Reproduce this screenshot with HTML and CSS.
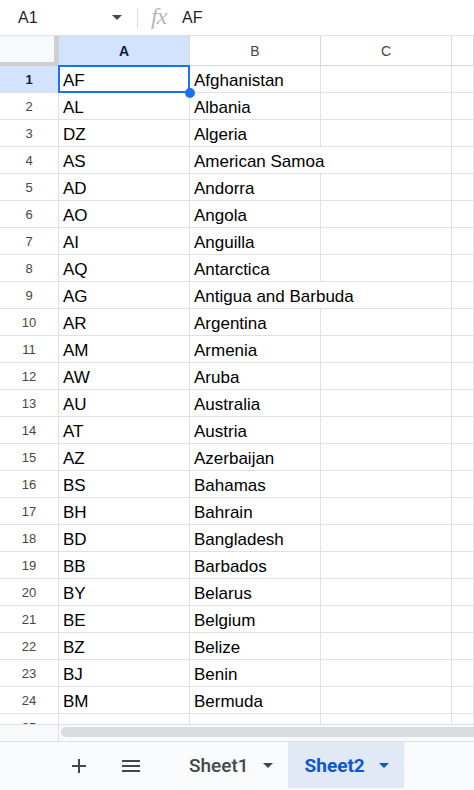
FILE: index.html
```html
<!DOCTYPE html>
<html>
<head>
  <meta charset="utf-8">
  <title>Countries</title>
  <link rel="stylesheet" href="styles.css">
</head>
<body>
  <div class="app">
    <div class="toolbar">
      <div class="namebox">A1</div>
      <span class="caret"></span>
      <span class="divider"></span>
      <span class="fx">fx</span>
      <div class="formula">AF</div>
    </div>

    <div class="sheet">
      <div class="row head">
        <div class="corner"></div>
        <div class="col sel">A</div>
        <div class="col">B</div>
        <div class="col">C</div>
        <div class="col"></div>
      </div>
      <div class="row">
        <div class="num sel">1</div>
        <div class="cell active">AF</div>
        <div class="cell">Afghanistan</div>
        <div class="cell"></div>
        <div class="cell"></div>
      </div>
      <div class="row"><div class="num">2</div><div class="cell">AL</div><div class="cell">Albania</div><div class="cell"></div><div class="cell"></div></div>
      <div class="row"><div class="num">3</div><div class="cell">DZ</div><div class="cell">Algeria</div><div class="cell"></div><div class="cell"></div></div>
      <div class="row"><div class="num">4</div><div class="cell">AS</div><div class="cell wide">American Samoa</div><div class="cell"></div></div>
      <div class="row"><div class="num">5</div><div class="cell">AD</div><div class="cell">Andorra</div><div class="cell"></div><div class="cell"></div></div>
      <div class="row"><div class="num">6</div><div class="cell">AO</div><div class="cell">Angola</div><div class="cell"></div><div class="cell"></div></div>
      <div class="row"><div class="num">7</div><div class="cell">AI</div><div class="cell">Anguilla</div><div class="cell"></div><div class="cell"></div></div>
      <div class="row"><div class="num">8</div><div class="cell">AQ</div><div class="cell">Antarctica</div><div class="cell"></div><div class="cell"></div></div>
      <div class="row"><div class="num">9</div><div class="cell">AG</div><div class="cell wide">Antigua and Barbuda</div><div class="cell"></div></div>
      <div class="row"><div class="num">10</div><div class="cell">AR</div><div class="cell">Argentina</div><div class="cell"></div><div class="cell"></div></div>
      <div class="row"><div class="num">11</div><div class="cell">AM</div><div class="cell">Armenia</div><div class="cell"></div><div class="cell"></div></div>
      <div class="row"><div class="num">12</div><div class="cell">AW</div><div class="cell">Aruba</div><div class="cell"></div><div class="cell"></div></div>
      <div class="row"><div class="num">13</div><div class="cell">AU</div><div class="cell">Australia</div><div class="cell"></div><div class="cell"></div></div>
      <div class="row"><div class="num">14</div><div class="cell">AT</div><div class="cell">Austria</div><div class="cell"></div><div class="cell"></div></div>
      <div class="row"><div class="num">15</div><div class="cell">AZ</div><div class="cell">Azerbaijan</div><div class="cell"></div><div class="cell"></div></div>
      <div class="row"><div class="num">16</div><div class="cell">BS</div><div class="cell">Bahamas</div><div class="cell"></div><div class="cell"></div></div>
      <div class="row"><div class="num">17</div><div class="cell">BH</div><div class="cell">Bahrain</div><div class="cell"></div><div class="cell"></div></div>
      <div class="row"><div class="num">18</div><div class="cell">BD</div><div class="cell">Bangladesh</div><div class="cell"></div><div class="cell"></div></div>
      <div class="row"><div class="num">19</div><div class="cell">BB</div><div class="cell">Barbados</div><div class="cell"></div><div class="cell"></div></div>
      <div class="row"><div class="num">20</div><div class="cell">BY</div><div class="cell">Belarus</div><div class="cell"></div><div class="cell"></div></div>
      <div class="row"><div class="num">21</div><div class="cell">BE</div><div class="cell">Belgium</div><div class="cell"></div><div class="cell"></div></div>
      <div class="row"><div class="num">22</div><div class="cell">BZ</div><div class="cell">Belize</div><div class="cell"></div><div class="cell"></div></div>
      <div class="row"><div class="num">23</div><div class="cell">BJ</div><div class="cell">Benin</div><div class="cell"></div><div class="cell"></div></div>
      <div class="row"><div class="num">24</div><div class="cell">BM</div><div class="cell">Bermuda</div><div class="cell"></div><div class="cell"></div></div>
      <div class="row"><div class="num">25</div><div class="cell"></div><div class="cell"></div><div class="cell"></div><div class="cell"></div></div>
    </div>

    <div class="hscroll">
      <div class="hscroll-corner"></div>
      <div class="track"><div class="thumb"></div></div>
    </div>

    <div class="tabs">
      <button class="icon-btn" title="Add sheet">
        <svg width="16" height="16" viewBox="0 0 16 16"><path d="M8 1v14M1 8h14" stroke="#444746" stroke-width="2" fill="none"/></svg>
      </button>
      <button class="icon-btn" title="All sheets">
        <svg width="18" height="14" viewBox="0 0 18 14"><path d="M0 2h18M0 7h18M0 12h18" stroke="#444746" stroke-width="2" fill="none"/></svg>
      </button>
      <div class="tab">Sheet1 <span class="tab-caret"></span></div>
      <div class="tab current">Sheet2 <span class="tab-caret"></span></div>
    </div>
  </div>
</body>
</html>
```

FILE: styles.css
```css
body {
  margin: 0;
  background-color: #fff;
  font-family: "Liberation Sans", Arial, sans-serif;
  color: #000;
}
.app {
  width: 474px;
  height: 790px;
  display: flex;
  flex-direction: column;
  overflow: hidden;
}

/* formula bar */
.toolbar {
  height: 35px;
  flex: none;
  display: flex;
  align-items: center;
  border-bottom: 1px solid #e1e1e1;
  font-size: 16px;
  color: #1f1f1f;
}
.namebox {
  width: 94px;
  padding-left: 18px;
}
.caret {
  width: 0;
  height: 0;
  border-left: 5px solid transparent;
  border-right: 5px solid transparent;
  border-top: 5px solid #444746;
  margin-right: 15px;
}
.divider {
  width: 1px;
  height: 20px;
  background: #dadce0;
  margin-right: 13px;
}
.fx {
  font-family: "Liberation Serif", serif;
  font-style: italic;
  font-size: 24px;
  letter-spacing: -1px;
  color: #b4b7bb;
  width: 31px;
  margin-top: -3px;
}

/* grid */
.sheet {
  flex: none;
  height: 688px;
  overflow: hidden;
}
.row {
  display: grid;
  grid-template-columns: 59px 131px 131px 131px 1fr;
  height: 27px;
}
.row > div {
  box-sizing: border-box;
  border-right: 1px solid #e1e1e1;
  border-bottom: 1px solid #e1e1e1;
  white-space: nowrap;
  overflow: hidden;
}
.row.head {
  height: 30px;
}
.row.head > div {
  border-color: #d6d6d6;
}
.corner {
  background: #f8f9fa;
  border-right: 5px solid #d0d0d0 !important;
  border-bottom: 4px solid #d0d0d0 !important;
}
.col {
  display: flex;
  align-items: center;
  justify-content: center;
  font-size: 14px;
  color: #444746;
}
.num {
  display: flex;
  align-items: center;
  justify-content: center;
  font-size: 13px;
  color: #444746;
  padding-top: 1px;
}
.sel {
  background: #d3e3fd;
  color: #0a1f44;
  font-weight: bold;
}
.cell {
  display: flex;
  align-items: flex-end;
  font-size: 17px;
  line-height: 20px;
  padding: 0 5px 1px 4px;
}
/* text running over the empty cell next to it */
.cell.wide {
  grid-column: span 2;
}
.cell.active {
  position: relative;
  overflow: visible !important;
}
.cell.active::before {
  content: "";
  position: absolute;
  left: -1px;
  top: -1px;
  right: -1px;
  bottom: -1px;
  border: 2px solid #1a73e8;
}
.cell.active::after {
  content: "";
  position: absolute;
  right: -6px;
  bottom: -6px;
  width: 10px;
  height: 10px;
  border-radius: 50%;
  background: #1a73e8;
  z-index: 2;
}

/* horizontal scrollbar */
.hscroll {
  flex: none;
  height: 16px;
  display: flex;
  border-top: 1px solid #e1e1e1;
  border-bottom: 1px solid #e1e1e1;
  background: #f8f9fa;
}
.hscroll-corner {
  width: 58px;
  border-right: 1px solid #e1e1e1;
}
.track {
  flex: 1;
  padding: 2px 0 0 2px;
}
.thumb {
  height: 10px;
  border-radius: 5px 0 0 5px;
  background: #dadce0;
}

/* sheet tabs */
.tabs {
  flex: 1;
  display: flex;
  align-items: stretch;
  background: #f9fbfd;
  padding-left: 61px;
}
.icon-btn {
  width: 36px;
  border: 0;
  background: none;
  padding: 0;
  display: flex;
  align-items: center;
  justify-content: center;
  margin-right: 16px;
}
.icon-btn + .icon-btn {
  margin-right: 23px;
}
.tab {
  display: flex;
  align-items: center;
  font-family: Roboto, "Liberation Sans", sans-serif;
  font-weight: 500;
  font-size: 19px;
  color: #444746;
  padding: 0 15px 0 17px;
  margin-bottom: 2px;
}
.tab-caret {
  width: 0;
  height: 0;
  border-left: 5px solid transparent;
  border-right: 5px solid transparent;
  border-top: 5px solid currentColor;
  margin-left: 14px;
}
.tab.current {
  background: #e1e9f7;
  color: #0b57d0;
  font-weight: 700;
}
```
